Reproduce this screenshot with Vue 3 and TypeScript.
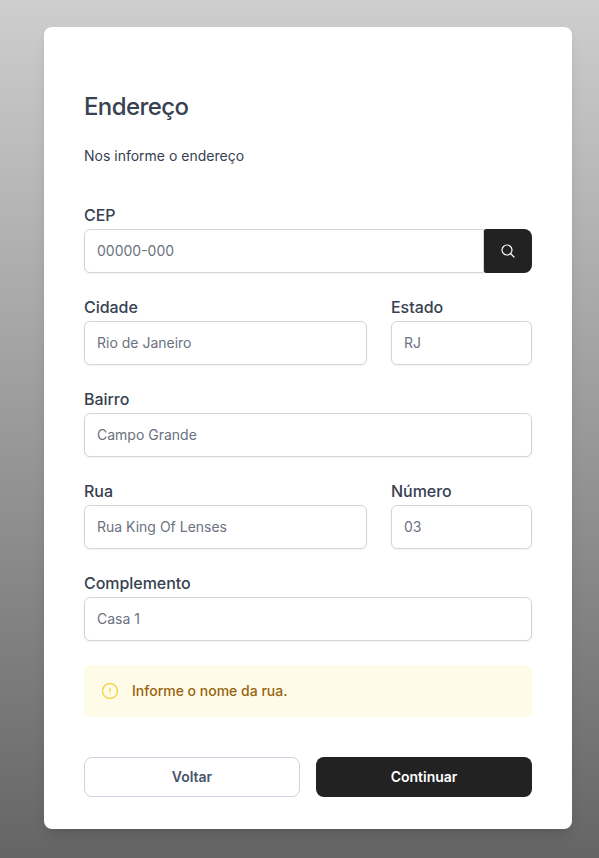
<script setup lang="ts">
interface Field {
  id: string
  label: string
  placeholder: string
  size: 'full' | 'wide' | 'narrow'
  search?: boolean
}

const fields: Field[] = [
  { id: 'cep', label: 'CEP', placeholder: '00000-000', size: 'full', search: true },
  { id: 'cidade', label: 'Cidade', placeholder: 'Rio de Janeiro', size: 'wide' },
  { id: 'estado', label: 'Estado', placeholder: 'RJ', size: 'narrow' },
  { id: 'bairro', label: 'Bairro', placeholder: 'Campo Grande', size: 'full' },
  { id: 'rua', label: 'Rua', placeholder: 'Rua King Of Lenses', size: 'wide' },
  { id: 'numero', label: 'Número', placeholder: '03', size: 'narrow' },
  { id: 'complemento', label: 'Complemento', placeholder: 'Casa 1', size: 'full' },
]
</script>

<template>
  <main class="page">
    <form class="card" @submit.prevent>
      <h1>Endereço</h1>
      <p class="subtitle">Nos informe o endereço</p>
      <div class="fields">
        <div v-for="f in fields" :key="f.id" class="field" :class="f.size">
          <label :for="f.id">{{ f.label }}</label>
          <div class="control" :class="{ joined: f.search }">
            <input :id="f.id" type="text" :placeholder="f.placeholder" />
            <button v-if="f.search" type="button" class="search">
              <svg width="16" height="16" viewBox="0 0 24 24" fill="none" stroke="currentColor" stroke-width="1.8" stroke-linecap="round" stroke-linejoin="round">
                <path d="m21 21-5.197-5.197m0 0A7.5 7.5 0 1 0 5.196 5.196a7.5 7.5 0 0 0 10.607 10.607Z" />
              </svg>
            </button>
          </div>
        </div>
      </div>
      <div class="alert">
        <svg width="20" height="20" viewBox="0 0 24 24" fill="none" stroke="currentColor" stroke-width="1.5" stroke-linecap="round" stroke-linejoin="round">
          <circle cx="12" cy="12" r="9" />
          <path d="M12 8.6v3.9M12 15.3h.008v.008H12v-.008Z" stroke-width="1.5" />
        </svg>
        <span>Informe o nome da rua.</span>
      </div>
      <div class="actions">
        <button type="button" class="btn back">Voltar</button>
        <button type="submit" class="btn next">Continuar</button>
      </div>
    </form>
  </main>
</template>

<style>
body {
  margin: 0;
}
</style>

<style scoped>
* {
  box-sizing: border-box;
}
.page {
  height: 858px;
  padding: 27px 27px 29px 44px;
  background: linear-gradient(#cecece, #656565);
  font-family: Inter, sans-serif;
  color: #374151;
  overflow: hidden;
}
.card {
  height: 802px;
  padding: 64px 40px 32px;
  border-radius: 8px;
  background: #fff;
  box-shadow: 0 10px 15px -3px rgba(0, 0, 0, 0.1), 0 4px 6px -4px rgba(0, 0, 0, 0.1);
}
h1 {
  margin: 0;
  font-size: 24px;
  line-height: 32px;
  font-weight: 500;
  letter-spacing: -0.6px;
}
.subtitle {
  margin: 23px 0 37px;
  font-size: 14px;
  line-height: 20px;
}
.fields {
  display: grid;
  grid-template-columns: 283px 141px;
  gap: 22px 24px;
}
.full {
  grid-column: span 2;
}
.field {
  min-width: 0;
}
label {
  display: block;
  margin-bottom: 2px;
  font-size: 16px;
  line-height: 24px;
  font-weight: 500;
  letter-spacing: -0.05px;
}
.control {
  display: flex;
  height: 44px;
}
input {
  flex: 1;
  min-width: 0;
  padding: 0 12px;
  border: 1px solid #d1d5db;
  border-radius: 6px;
  outline: none;
  background: #fff;
  font: 14px/20px Inter, sans-serif;
  color: #374151;
  box-shadow: 0 1px 2px rgba(0, 0, 0, 0.05);
}
input::placeholder {
  color: #6b7280;
  opacity: 1;
}
.joined input {
  border-radius: 6px 0 0 6px;
}
button {
  padding: 0;
  border: 0;
  font-family: inherit;
}
.search {
  display: flex;
  align-items: center;
  justify-content: center;
  width: 48px;
  border-radius: 2px 8px 8px 2px;
  background: #222;
  color: #fff;
}
.alert {
  display: flex;
  align-items: center;
  gap: 12px;
  height: 52px;
  margin-top: 24px;
  padding: 0 16px;
  border-radius: 6px;
  background: #fefce8;
  color: #f2d233;
}
.alert span {
  font-size: 14px;
  line-height: 20px;
  font-weight: 500;
  color: #97620f;
}
.actions {
  display: grid;
  grid-template-columns: 1fr 1fr;
  gap: 16px;
  margin-top: 40px;
}
.btn {
  height: 40px;
  border-radius: 8px;
  font-size: 14px;
  line-height: 20px;
  font-weight: 600;
}
.back {
  border: 1px solid #cbd5e1;
  background: #fff;
  color: #475569;
}
.next {
  background: #222;
  color: #fff;
}
</style>
